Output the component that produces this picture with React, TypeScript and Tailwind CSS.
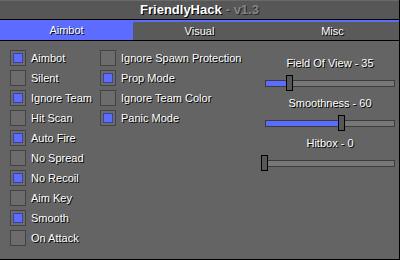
const aimbotLeft = [
  { label: 'Aimbot', on: true },
  { label: 'Silent', on: false },
  { label: 'Ignore Team', on: true },
  { label: 'Hit Scan', on: false },
  { label: 'Auto Fire', on: true },
  { label: 'No Spread', on: false },
  { label: 'No Recoil', on: true },
  { label: 'Aim Key', on: false },
  { label: 'Smooth', on: true },
  { label: 'On Attack', on: false },
]

const aimbotRight = [
  { label: 'Ignore Spawn Protection', on: false },
  { label: 'Prop Mode', on: true },
  { label: 'Ignore Team Color', on: false },
  { label: 'Panic Mode', on: true },
]

const sliders = [
  { label: 'Field Of View - 35', frac: 35 / 180 },
  { label: 'Smoothness - 60', frac: 0.6 },
  { label: 'Hitbox - 0', frac: 0 },
]

const shadow = '[text-shadow:1px_1px_0_#000]'

function Check({ label, on }: { label: string; on: boolean }) {
  return (
    <div className="flex items-center h-[20px] gap-[5px]">
      <div className="w-4 h-4 border border-[#434343] bg-[#6c6c6c] p-[2px] shrink-0">
        {on && <div className="w-full h-full bg-[#5b6cff] border border-[#3a44a0]" />}
      </div>
      <span className={`text-[11px] text-white leading-none whitespace-nowrap ${shadow}`}>{label}</span>
    </div>
  )
}

function Slider({ label, frac }: { label: string; frac: number }) {
  const left = Math.round(frac * 128 - 4)
  return (
    <div className="flex flex-col items-center gap-[5px] mb-[5px]">
      <span className={`h-[14px] leading-[14px] text-[11px] text-white ${shadow}`}>{label}</span>
      <div className="relative w-[130px] h-4">
        <div className="absolute left-0 right-0 top-[5px] h-[7px] border border-[#3c3c3c] bg-[#777777]">
          <div className="h-full bg-[#5b6cff]" style={{ width: Math.max(0, left) }} />
        </div>
        <div
          className="absolute top-0 w-[7px] h-4 border border-black bg-[#575757]"
          style={{ left }}
        />
      </div>
    </div>
  )
}

export default function App() {
  return (
    <div className="w-[400px] h-[260px] flex flex-col bg-[#646464] border-r border-b border-black font-['Liberation_Sans',Arial,sans-serif] overflow-hidden">
      {/* title */}
      <div className="h-[20px] shrink-0 flex items-center justify-center bg-[#575757] border-b border-black border-t border-t-[#6a6a6a]">
        <span className={`text-[13px] font-bold text-white ${shadow}`}>FriendlyHack</span>
        <span className="text-[13px] font-bold text-[#858585] ml-[4px] [text-shadow:1px_1px_0_#2a2a2a]">- v1.3</span>
      </div>

      {/* tabs */}
      <div className="h-[21px] shrink-0 grid grid-cols-3 border-b border-black bg-[#5a5a5a] border-t-2 border-t-[#5b6cff]">
        <div className={`-mt-[2px] bg-[#5b6cff] flex items-center justify-center text-[11px] text-white ${shadow}`}>Aimbot</div>
        <div className={`flex items-center justify-center text-[11px] text-white ${shadow}`}>Visual</div>
        <div className={`flex items-center justify-center text-[11px] text-white ${shadow}`}>Misc</div>
      </div>

      {/* body */}
      <div className="flex flex-1 pt-[7px] pl-[10px] pr-[4px]">
        <div className="w-[90px] flex flex-col">
          {aimbotLeft.map((c) => <Check key={c.label} {...c} />)}
        </div>
        <div className="flex flex-col">
          {aimbotRight.map((c) => <Check key={c.label} {...c} />)}
        </div>
        <div className="ml-auto pt-[8px] flex flex-col">
          {sliders.map((s) => <Slider key={s.label} {...s} />)}
        </div>
      </div>
    </div>
  )
}
